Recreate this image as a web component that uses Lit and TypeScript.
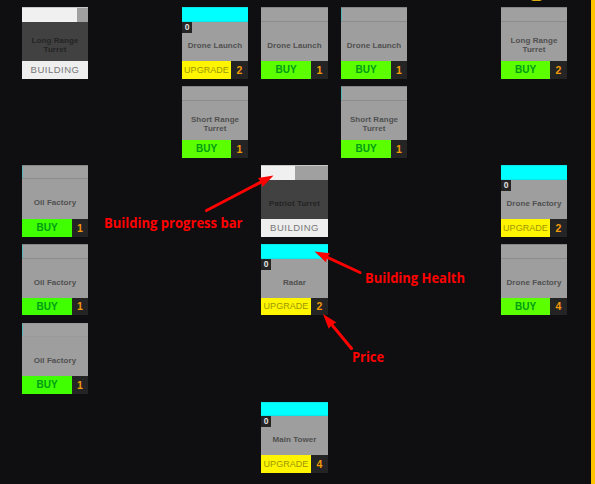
import { LitElement, html, css, svg, nothing } from "lit";
import { customElement, property } from "lit/decorators.js";
import { classMap } from "lit/directives/class-map.js";
import { styleMap } from "lit/directives/style-map.js";

type Kind = "buy" | "upgrade" | "building";

interface Building {
  name: string[];
  kind: Kind;
  col: number;
  row: number;
  price?: number;
  progress?: number;
  sliver?: boolean;
}

const buildings: Building[] = [
  { name: ["Long Range", "Turret"], kind: "building", col: 1, row: 1, progress: 54.5 },
  { name: ["Drone Launch"], kind: "upgrade", col: 2, row: 1, price: 2 },
  { name: ["Drone Launch"], kind: "buy", col: 3, row: 1, price: 1 },
  { name: ["Drone Launch"], kind: "buy", col: 4, row: 1, price: 1, sliver: true },
  { name: ["Long Range", "Turret"], kind: "buy", col: 5, row: 1, price: 2 },
  { name: ["Short Range", "Turret"], kind: "buy", col: 2, row: 2, price: 1 },
  { name: ["Short Range", "Turret"], kind: "buy", col: 4, row: 2, price: 1, sliver: true },
  { name: ["Oil Factory"], kind: "buy", col: 1, row: 3, price: 1, sliver: true },
  { name: ["Patriot Turret"], kind: "building", col: 3, row: 3, progress: 34 },
  { name: ["Drone Factory"], kind: "upgrade", col: 5, row: 3, price: 2 },
  { name: ["Oil Factory"], kind: "buy", col: 1, row: 4, price: 1, sliver: true },
  { name: ["Radar"], kind: "upgrade", col: 3, row: 4, price: 2 },
  { name: ["Drone Factory"], kind: "buy", col: 5, row: 4, price: 4 },
  { name: ["Oil Factory"], kind: "buy", col: 1, row: 5, price: 1, sliver: true },
  { name: ["Main Tower"], kind: "upgrade", col: 3, row: 6, price: 4 },
];

@customElement("building-card")
export class BuildingCard extends LitElement {
  @property({ attribute: false }) data!: Building;

  static styles = css`
    :host { display: block; }
    .card {
      height: 100%;
      display: flex;
      flex-direction: column;
      background: #9e9e9e;
      font-family: "Liberation Sans", Arial, sans-serif;
    }
    .bar {
      flex: none;
      height: 15px;
      box-sizing: border-box;
      border-top: 1px solid #858585;
      border-bottom: 1px solid #8c8c8c;
      background: #a0a0a0;
      display: flex;
    }
    .short .bar { height: 14px; }
    .plain .bar { border-color: #9a9a9a; }
    .upgrade .bar { background: #00ffff; border-color: #08e8ea; }
    .building .bar { border-top-color: #c8c8c8; border-bottom: 0; }
    .fill { background: #f0f0f0; }
    .sliver { width: 1px; background: #55b5b7; }
    .body {
      position: relative;
      flex: 1;
      display: flex;
      flex-direction: column;
      align-items: center;
      justify-content: center;
      padding-top: 7px;
      color: #505050;
      font-size: 8px;
      font-weight: bold;
      line-height: 9px;
      letter-spacing: 0.06px;
      white-space: nowrap;
    }
    .building .body { background: #414141; color: #242424; }
    .level {
      position: absolute;
      left: 0;
      top: 0;
      width: 10px;
      height: 11px;
      background: #242424;
      color: #e4e4e4;
      font-size: 8.5px;
      line-height: 11px;
      text-align: center;
      letter-spacing: 0;
    }
    .foot { flex: none; height: 18px; display: flex; line-height: 18px; text-align: center; }
    .low .foot { height: 17px; line-height: 17px; }
    .action { flex: 1; white-space: nowrap; }
    .buy .action { background: #5cff00; color: #009c16; font-size: 10px; font-weight: bold; }
    .green .action { background: #3fff00; }
    .upgrade .action { background: #fff500; color: #9c9700; font-size: 9px; letter-spacing: 0.05px; }
    .building .action { background: #eeeeee; color: #777; font-size: 9.5px; letter-spacing: 0.5px; }
    .price {
      width: 17px;
      background: #242424;
      color: #f39a08;
      font-size: 10.5px;
      font-weight: bold;
    }
    .narrow .price { width: 16px; }
  `;

  render() {
    const b = this.data;
    const label = { buy: "BUY", upgrade: "UPGRADE", building: "BUILDING" }[b.kind];
    const classes = {
      card: true,
      [b.kind]: true,
      short: b.row === 5 || b.row === 6 || (b.kind === "buy" && b.row === 3),
      low: b.row === 4,
      narrow: b.col === 1 || b.col === 4,
      green: b.col === 1,
      plain: b.row === 5,
    };
    return html`
      <div class=${classMap(classes)}>
        <div class="bar">
          ${b.progress ? html`<div class="fill" style=${styleMap({ width: `${b.progress}px` })}></div>` : nothing}
          ${b.sliver ? html`<div class="sliver"></div>` : nothing}
        </div>
        <div class="body">
          ${b.kind === "upgrade" ? html`<span class="level">0</span>` : nothing}
          ${b.name.map((line) => html`<span>${line}</span>`)}
        </div>
        <div class="foot">
          <div class="action">${label}</div>
          ${b.price ? html`<div class="price">${b.price}</div>` : nothing}
        </div>
      </div>
    `;
  }
}

const arrow = (x1: number, y1: number, x2: number, y2: number) => {
  const length = Math.hypot(x2 - x1, y2 - y1);
  const angle = (Math.atan2(y2 - y1, x2 - x1) * 180) / Math.PI;
  return svg`
    <g transform="translate(${x2} ${y2}) rotate(${angle})">
      <path class="shaft" d="M${-length} 0H-10" />
      <path class="head" d="M0 0L-15 -5L-14 0L-15 5Z" />
    </g>`;
};

@customElement("app-root")
export class AppRoot extends LitElement {
  static styles = css`
    :host {
      display: block;
      position: relative;
      width: 595px;
      height: 484px;
      overflow: hidden;
      box-sizing: border-box;
      background: #0f0e11;
      border-right: 4px solid #ffc400;
    }
    .board {
      display: grid;
      grid-template-columns: 160px 79px 80px 160px 66px;
      grid-template-rows: 79px 79px 79px 79px 79px 71px;
      padding: 7px 0 0 22px;
    }
    building-card { width: 66px; height: 72px; }
    .wide { width: 67px; }
    .squat { height: 71px; }
    .notes { position: absolute; inset: 0; width: 591px; height: 484px; }
    .shaft { stroke: #f00; stroke-width: 3; stroke-linecap: round; }
    .head { fill: #f00; }
    .note { fill: #f00; font: 700 13.5px "Open Sans", "Noto Sans", sans-serif; }
    .coin { fill: #d9ae0c; }
  `;

  render() {
    return html`
      <div class="board">
        ${buildings.map(
          (b) => html`<building-card
            class=${classMap({ wide: b.col === 3, squat: b.row > 3 })}
            style=${styleMap({ gridColumn: `${b.col}`, gridRow: `${b.row}` })}
            .data=${b}
          ></building-card>`
        )}
      </div>
      <svg class="notes" viewBox="0 0 591 484">
        <path class="coin" d="M531 0H542L540 1H533Z" />
        ${arrow(206.5, 210.5, 273.5, 175.5)}
        ${arrow(360, 272.5, 314.5, 251.5)}
        ${arrow(351.5, 348.5, 323, 314)}
        <text class="note" x="104" y="228" textLength="138.5" lengthAdjust="spacingAndGlyphs">Building progress bar</text>
        <text class="note" x="365" y="283" textLength="100" lengthAdjust="spacingAndGlyphs">Building Health</text>
        <text class="note" x="352" y="362" textLength="32" lengthAdjust="spacingAndGlyphs">Price</text>
      </svg>
    `;
  }
}
